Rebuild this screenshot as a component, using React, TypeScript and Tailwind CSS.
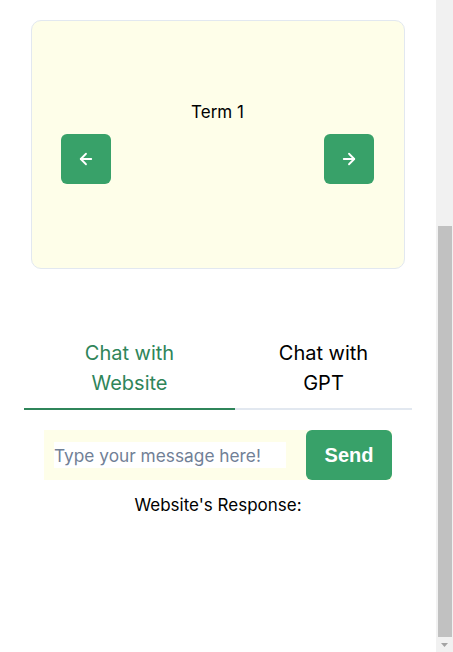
import { LuArrowLeft, LuArrowRight } from 'react-icons/lu';

export default function App() {
  return (
    <div className="flex h-[652px] w-[453px] overflow-hidden bg-white text-black" style={{ fontFamily: 'Inter, "Noto Sans", sans-serif' }}>
      {/* Page */}
      <div className="flex w-[436px] flex-col items-center">
        {/* Flashcard */}
        <div className="mt-[20px] flex h-[249px] w-[374px] flex-col rounded-[10px] border border-[#e2e8f0] bg-[#fefee9] pl-[29px] pr-[30px] pt-[79px]">
          <p className="text-center text-[17px] leading-[24px]">Term 1</p>
          <div className="mt-[10px] flex justify-between">
            <button className="flex h-[50px] w-[50px] items-center justify-center rounded-[6px] bg-[#38a169] text-white">
              <LuArrowLeft size={18} strokeWidth={2.4} />
            </button>
            <button className="flex h-[50px] w-[50px] items-center justify-center rounded-[6px] bg-[#38a169] text-white">
              <LuArrowRight size={18} strokeWidth={2.4} />
            </button>
          </div>
        </div>

        {/* Tabs */}
        <div className="mt-[69px] flex w-[388px]">
          <button className="w-[211px] border-b-2 border-[#2f855a] pb-[10px] text-center text-[20px] leading-[30px] text-[#2f855a]">
            Chat with
            <br />
            Website
          </button>
          <button className="flex-1 border-b-2 border-[#e2e8f0] pb-[10px] text-center text-[20px] leading-[30px] text-black">
            Chat with
            <br />
            GPT
          </button>
        </div>

        {/* Input row */}
        <div className="mt-[20px] flex h-[50px] w-[348px] bg-[#fefee9]">
          <div className="flex flex-1 items-center pl-[10px] pr-[20px]">
            <input
              className="h-[26px] w-full bg-white text-[17.3px] text-black outline-none placeholder:text-[#718096]"
              placeholder="Type your message here!"
            />
          </div>
          <button
            className="w-[86px] rounded-[6px] bg-[#38a169] text-[20px] font-bold text-white"
            style={{ fontFamily: '"Liberation Sans", Arial, sans-serif' }}
          >
            Send
          </button>
        </div>

        <p className="mt-[13px] text-center text-[17px] leading-[24px]">Website's Response:</p>
      </div>

      {/* Scrollbar */}
      <div className="flex w-[17px] flex-col bg-[#f1f1f1]">
        <div className="h-[226px]" />
        <div className="ml-[2px] h-[411px] w-[14px] bg-[#c1c1c1]" />
        <div className="flex flex-1 items-center justify-center">
          <svg width="7" height="4" viewBox="0 0 7 4">
            <path d="M0 0 L7 0 L3.5 4 Z" fill="#a3a3a3" />
          </svg>
        </div>
      </div>
    </div>
  );
}
